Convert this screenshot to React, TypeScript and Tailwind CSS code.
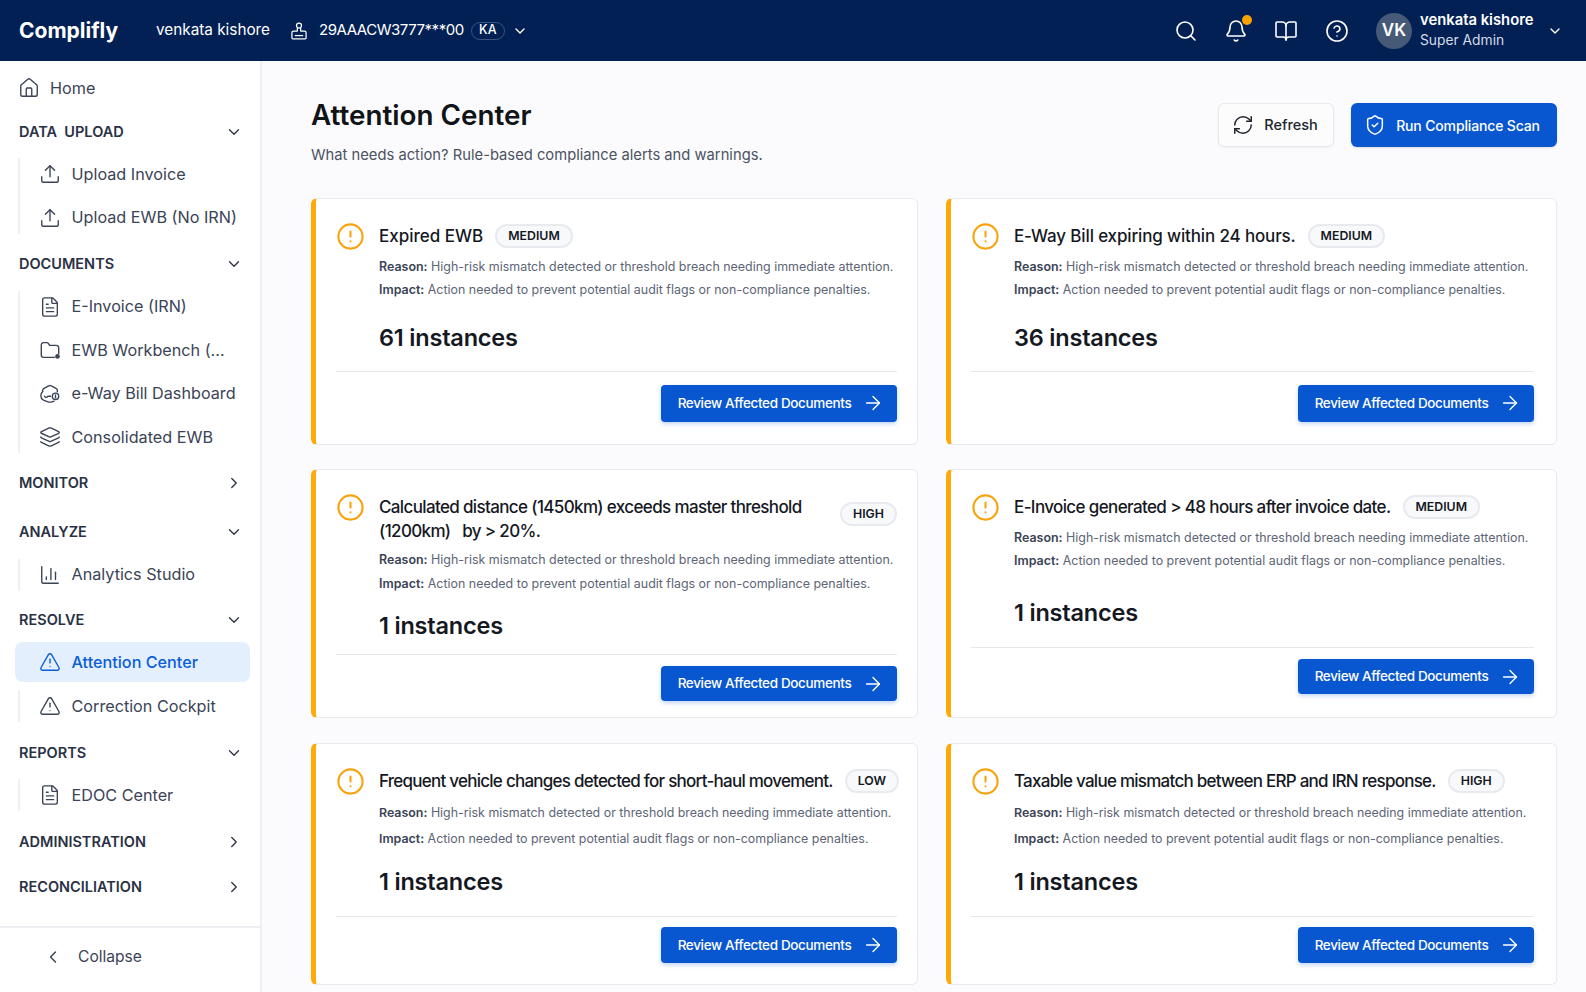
import React from "react";
import {
  ArrowRight,
  Bell,
  BookOpen,
  ChartColumn,
  ChevronDown,
  ChevronLeft,
  ChevronRight,
  CircleAlert,
  CircleHelp,
  FileText,
  House,
  Layers,
  RefreshCw,
  Search,
  ShieldCheck,
  TriangleAlert,
  Upload,
} from "lucide-react";

const reason = "High-risk mismatch detected or threshold breach needing immediate attention.";
const impact = "Action needed to prevent potential audit flags or non-compliance penalties.";

type IconProps = { size?: number; strokeWidth?: number; className?: string };

const StampIcon: React.FC<IconProps> = ({ size = 20, className }) => (
  <svg width={size} height={size} viewBox="0 0 24 24" fill="none" stroke="currentColor" strokeWidth={1.5} strokeLinejoin="round" className={className}>
    <circle cx="12" cy="5.5" r="3" />
    <path d="M10 8.5V12H5.5a2 2 0 0 0-2 2v6.5a1 1 0 0 0 1 1h15a1 1 0 0 0 1-1V14a2 2 0 0 0-2-2H14V8.5" />
    <path d="M7 17.5h10" />
  </svg>
);

const FolderDotIcon: React.FC<IconProps> = ({ size = 22, strokeWidth = 1.5, className }) => (
  <svg width={size} height={size} viewBox="0 0 24 24" fill="none" stroke="currentColor" strokeWidth={strokeWidth} strokeLinecap="round" strokeLinejoin="round" className={className}>
    <path d="M17 20H5a2.5 2.5 0 0 1-2.5-2.5v-11A2.5 2.5 0 0 1 5 4h3.6a2 2 0 0 1 1.6.8L11.5 7H19a2.5 2.5 0 0 1 2.5 2.5V16" />
    <circle cx="20.2" cy="19" r="1.8" fill="currentColor" />
  </svg>
);

const HexTruckIcon: React.FC<IconProps> = ({ size = 22, strokeWidth = 1.5, className }) => (
  <svg width={size} height={size} viewBox="0 0 24 24" fill="none" stroke="currentColor" strokeWidth={strokeWidth} strokeLinecap="round" strokeLinejoin="round" className={className}>
    <path d="M10.5 3.2 5 6.2a2 2 0 0 0-1 1.7v1.5M10.5 3.2a3 3 0 0 1 3 0l5.5 3a2 2 0 0 1 1 1.7v1.6" />
    <path d="M4 9.4C2.8 10.5 2 12 2 14a5.5 5.5 0 0 0 2.8 4.7l5.7 2.1h3l3-1" />
    <path d="M6 14.5c1 1.6 2.6 1.6 3.6 0h3" />
    <circle cx="18" cy="14.5" r="3.5" />
    <path d="M18 13v3" />
  </svg>
);

interface NavItem {
  label: string;
  icon: React.FC<IconProps>;
  active?: boolean;
}

interface NavGroup {
  label: string;
  open: boolean;
  top: string;
  items: NavItem[];
}

const navGroups: NavGroup[] = [
  {
    label: "DATA  UPLOAD",
    open: true,
    top: "mt-[17.5px]",
    items: [
      { label: "Upload Invoice", icon: Upload },
      { label: "Upload EWB (No IRN)", icon: Upload },
    ],
  },
  {
    label: "DOCUMENTS",
    open: true,
    top: "mt-[17.5px]",
    items: [
      { label: "E-Invoice (IRN)", icon: FileText },
      { label: "EWB Workbench (...", icon: FolderDotIcon },
      { label: "e-Way Bill Dashboard", icon: HexTruckIcon },
      { label: "Consolidated EWB", icon: Layers },
    ],
  },
  { label: "MONITOR", open: false, top: "mt-[16.5px]", items: [] },
  { label: "ANALYZE", open: true, top: "mt-[23.5px]", items: [{ label: "Analytics Studio", icon: ChartColumn }] },
  {
    label: "RESOLVE",
    open: true,
    top: "mt-[16.5px]",
    items: [
      { label: "Attention Center", icon: TriangleAlert, active: true },
      { label: "Correction Cockpit", icon: TriangleAlert },
    ],
  },
  { label: "REPORTS", open: true, top: "mt-[17.5px]", items: [{ label: "EDOC Center", icon: FileText }] },
  { label: "ADMINISTRATION", open: false, top: "mt-[17.5px]", items: [] },
  { label: "RECONCILIATION", open: false, top: "mt-[19.5px]", items: [] },
];

interface Alert {
  title: string;
  severity: string;
  count: number;
  height: string;
  tracking: string;
  wrapBadge?: boolean;
  reasonGap: string;
  impactGap: string;
  countGap: string;
  footer: string;
  button: string;
  body: string;
}

const alerts: Alert[] = [
  {
    title: "Expired EWB",
    severity: "MEDIUM",
    count: 61,
    height: "h-[247px]",
    tracking: "tracking-[0px]",
    reasonGap: "mt-[6.6px]",
    impactGap: "mt-0",
    countGap: "mt-[20.8px]",
    footer: "pt-[13px] pb-[21.5px]",
    button: "h-[37.5px]",
    body: "text-[12.45px]",
  },
  {
    title: "E-Way Bill expiring within 24 hours.",
    severity: "MEDIUM",
    count: 36,
    height: "h-[247px]",
    tracking: "tracking-[-0.15px]",
    reasonGap: "mt-[6.6px]",
    impactGap: "mt-0",
    countGap: "mt-[20.8px]",
    footer: "pt-[13px] pb-[21.5px]",
    button: "h-[37.5px]",
    body: "text-[12.45px]",
  },
  {
    title: "Calculated distance (1450km) exceeds master threshold\n(1200km)   by > 20%.",
    severity: "HIGH",
    count: 1,
    height: "h-[249.5px]",
    tracking: "tracking-[-0.64px]",
    wrapBadge: true,
    reasonGap: "mt-[4.4px]",
    impactGap: "mt-0",
    countGap: "mt-[14.7px]",
    footer: "pt-[10.5px] pb-[16px]",
    button: "h-[35.6px]",
    body: "text-[12.45px]",
  },
  {
    title: "E-Invoice generated > 48 hours after invoice date.",
    severity: "MEDIUM",
    count: 1,
    height: "h-[249.5px]",
    tracking: "tracking-[-0.62px]",
    reasonGap: "mt-[6.4px]",
    impactGap: "mt-0",
    countGap: "mt-[24.3px]",
    footer: "pt-[11px] pb-[23px]",
    button: "h-[35.6px]",
    body: "text-[12.45px]",
  },
  {
    title: "Frequent vehicle changes detected for short-haul movement.",
    severity: "LOW",
    count: 1,
    height: "h-[242px]",
    tracking: "tracking-[-0.75px]",
    reasonGap: "mt-[8px]",
    impactGap: "mt-[2.3px]",
    countGap: "mt-[15.7px]",
    footer: "pt-[10.5px] pb-[21px]",
    button: "h-[35.3px]",
    body: "text-[12.4px]",
  },
  {
    title: "Taxable value mismatch between ERP and IRN response.",
    severity: "HIGH",
    count: 1,
    height: "h-[242px]",
    tracking: "tracking-[-0.74px]",
    reasonGap: "mt-[8px]",
    impactGap: "mt-[2.3px]",
    countGap: "mt-[15.7px]",
    footer: "pt-[10.5px] pb-[21px]",
    button: "h-[35.3px]",
    body: "text-[12.4px]",
  },
];

const NavRow: React.FC<{ item: NavItem }> = ({ item }) => (
  <div className="flex items-center h-[32px] pl-[18.5px] gap-[11px] text-[16.2px] whitespace-nowrap">
    <item.icon size={22} strokeWidth={1.5} className="shrink-0" />
    <span>{item.label}</span>
  </div>
);

const Sidebar: React.FC = () => (
  <aside className="w-[262px] shrink-0 h-full flex flex-col bg-white border-r-2 border-[#eceef2] text-[#3b4356]">
    <div className="flex-1 pl-[15px] pr-[10px] pt-[14px]">
      <div className="flex items-center h-[26px] pl-[3px] gap-[10px] text-[16.2px]">
        <House size={22} strokeWidth={1.5} />
        <span>Home</span>
      </div>
      {navGroups.map((group) => {
        const active = group.items.find((i) => i.active);
        const rest = group.items.filter((i) => !i.active);
        return (
          <div key={group.label} className={group.top}>
            <div className="flex items-center justify-between h-[26px] pl-1 pr-[7.5px] text-[14.5px] font-semibold text-[#2a3145] whitespace-pre">
              <span>{group.label}</span>
              {group.open ? <ChevronDown size={18} strokeWidth={1.75} /> : <ChevronRight size={18} strokeWidth={1.75} />}
            </div>
            {active && (
              <div className="mt-[9px] flex items-center h-[40px] pl-[23.5px] gap-[11px] rounded-lg bg-[#e3effc] text-[#0b5ed7] text-[16.2px] font-medium">
                <active.icon size={22} strokeWidth={1.5} />
                <span>{active.label}</span>
              </div>
            )}
            {rest.length > 0 && (
              <div className={`${active ? "mt-[8px]" : "mt-[13.5px]"} ml-[3px] border-l-2 border-[#eef0f3] flex flex-col gap-[11.5px]`}>
                {rest.map((item) => (
                  <NavRow key={item.label} item={item} />
                ))}
              </div>
            )}
          </div>
        );
      })}
    </div>
    <div className="h-[66px] border-t-2 border-[#eceef2] flex items-center pb-[7px] pl-[43px] gap-[15px] text-[15.6px]">
      <ChevronLeft size={20} strokeWidth={1.75} />
      <span>Collapse</span>
    </div>
  </aside>
);

const AlertCard: React.FC<{ alert: Alert; right: boolean }> = ({ alert, right }) => (
  <div
    className={`${alert.height} ${right ? "pr-[22px]" : "pr-[20px]"} flex flex-col bg-white border border-[#e8eaee] border-l-[5px] border-l-[#ffa90a] rounded-md pl-[20px] pt-[25px]`}
  >
    <div className="flex-1 flex items-start gap-[14px]">
      <CircleAlert size={29} strokeWidth={1.75} className="text-[#f9a30c] shrink-0 -mt-[2px]" />
      <div className="flex-1 min-w-0">
        <div className={`flex items-center gap-[12px] ${alert.wrapBadge ? "justify-between" : ""}`}>
          <div className={`text-[17px] font-medium leading-[24.5px] text-[#15181f] whitespace-pre ${alert.tracking}`}>{alert.title}</div>
          <span
            className={`shrink-0 h-[24px] px-[11px] flex items-center rounded-full border-2 border-[#e8eaf0] bg-[#f8f9fb] text-[12.3px] font-semibold text-[#15181f] ${
              alert.wrapBadge ? "mb-[10px]" : ""
            }`}
          >
            {alert.severity}
          </span>
        </div>
        <p className={`${alert.reasonGap} ${alert.body} leading-[23.3px] text-[#5c6475] whitespace-nowrap`}>
          <span className="font-semibold text-[#3b4356]">Reason:</span> {reason}
        </p>
        <p className={`${alert.impactGap} ${alert.body} leading-[23.3px] text-[#5c6475] whitespace-nowrap`}>
          <span className="font-semibold text-[#3b4356]">Impact:</span> {impact}
        </p>
        <div className={`${alert.countGap} text-[23.5px] leading-[32px] font-semibold tracking-[-0.2px] text-[#15181f]`}>{alert.count} instances</div>
      </div>
    </div>
    <div className={`border-t border-[#e5e7eb] flex justify-end ${alert.footer}`}>
      <button className={`${alert.button} w-[236px] pl-[4px] flex items-center justify-center gap-[11px] rounded bg-[#0857d0] text-white text-[13.5px] tracking-[-0.35px] font-medium shadow-[0_2px_4px_rgba(8,87,208,0.25)]`}>
        Review Affected Documents
        <ArrowRight size={22} strokeWidth={1.5} />
      </button>
    </div>
  </div>
);

export default function App() {
  return (
    <div className="h-[992px] overflow-hidden flex flex-col font-['Inter',sans-serif] bg-[#fbfbfd]">
      <header className="h-[61px] shrink-0 bg-[#022054] text-white flex items-center pl-[19px] pr-[23px]">
        <span className="text-[21px] font-bold w-[137px]">Complifly</span>
        <span className="text-[15.3px]">venkata kishore</span>
        <StampIcon size={20} className="ml-[19px]" />
        <span className="ml-[10px] text-[15px] tracking-[-0.45px]">29AAACW3777***00</span>
        <span className="ml-[7px] h-[18px] w-[34px] flex items-center justify-center rounded-full border border-[#3a5380] text-[12.5px] font-medium">KA</span>
        <ChevronDown size={16} className="ml-[7px]" />
        <div className="flex-1" />
        <Search size={24} strokeWidth={1.6} />
        <div className="relative ml-[26px]">
          <Bell size={24} strokeWidth={1.6} />
          <span className="absolute -top-[4px] -right-[4px] w-[10px] h-[10px] rounded-full bg-[#f8a208]" />
        </div>
        <BookOpen size={24} strokeWidth={1.6} className="ml-[26px]" />
        <CircleHelp size={24} strokeWidth={1.6} className="ml-[27px]" />
        <div className="ml-[27px] w-[36px] h-[36px] rounded-full bg-[#465a78] flex items-center justify-center text-[17px] font-semibold">VK</div>
        <div className="ml-[8px] w-[127px] -mt-[2px]">
          <div className="text-[14.8px] font-semibold leading-5">venkata kishore</div>
          <div className="text-[13.8px] leading-5 text-[#d5dbe6]">Super Admin</div>
        </div>
        <ChevronDown size={16} />
      </header>
      <div className="flex-1 flex min-h-0">
        <Sidebar />
        <main className="flex-1 min-w-0 pl-[49px] pr-[29px] pt-[36px]">
          <div className="flex justify-between items-start h-[100.5px]">
            <div>
              <h1 className="text-[27.8px] leading-[36px] font-semibold text-[#101318]">Attention Center</h1>
              <p className="mt-[11px] text-[14.75px] text-[#4b5262]">What needs action? Rule-based compliance alerts and warnings.</p>
            </div>
            <div className="flex gap-[17px] mt-[6.3px]">
              <button className="h-[43.5px] w-[116px] pr-[2px] flex items-center justify-center gap-[10px] bg-[#fcfcfd] border-[1.5px] border-[#e6e8ec] rounded-md text-[14.5px] font-medium text-[#20242c] shadow-xs">
                <RefreshCw size={22} strokeWidth={1.6} />
                Refresh
              </button>
              <button className="h-[43.5px] w-[206px] pr-[4px] flex items-center justify-center gap-[10px] bg-[#0857d0] rounded-md text-[14px] tracking-[-0.15px] font-medium text-white shadow-sm">
                <ShieldCheck size={22} strokeWidth={1.6} />
                Run Compliance Scan
              </button>
            </div>
          </div>
          <div className="grid grid-cols-[minmax(0,607fr)_minmax(0,611fr)] gap-x-[28px] gap-y-[24.4px]">
            {alerts.map((a, i) => (
              <AlertCard key={i} alert={a} right={i % 2 === 1} />
            ))}
          </div>
        </main>
      </div>
    </div>
  );
}
